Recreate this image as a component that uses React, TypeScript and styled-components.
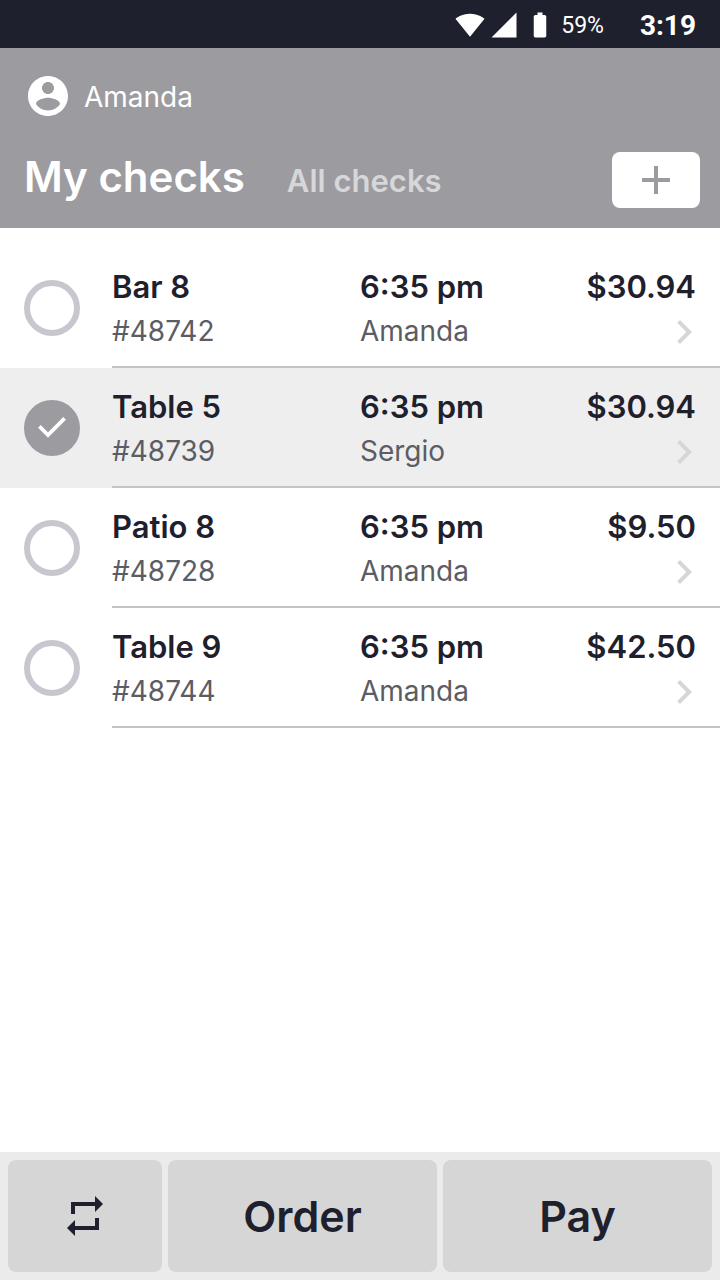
import React, { useState } from "react";
import styled, { createGlobalStyle } from "styled-components";

const ink = "#1f202d";
const grey = "#9b9ba0";

const GlobalStyle = createGlobalStyle`
  *, *::before, *::after { box-sizing: border-box; }
  body { margin: 0; background: #fff; }
  button { border: 0; padding: 0; background: none; color: inherit; font: inherit; cursor: pointer; }
`;

const Screen = styled.div`
  min-height: 100vh;
  display: flex;
  flex-direction: column;
  background: #fff;
  color: ${ink};
  font-family: Inter, "Liberation Sans", sans-serif;
`;

const StatusBar = styled.div`
  height: 48px;
  padding: 2px 24px 0 0;
  display: flex;
  align-items: center;
  justify-content: flex-end;
  gap: 6px;
  background: ${ink};
  color: #fff;
  font-family: Roboto, sans-serif;
  line-height: 32px;
`;

const Signals = styled.div`
  display: flex;
  gap: 4px;
`;

const BatteryLevel = styled.span`
  padding-top: 2px;
  font-size: 23px;
`;

const Clock = styled.time`
  margin-left: 30px;
  padding-top: 2px;
  font-size: 28px;
  font-weight: 700;
`;

const Header = styled.header`
  padding: 24px 20px 20px 24px;
  display: flex;
  flex-direction: column;
  gap: 32px;
  background: ${grey};
  color: #fff;
`;

const User = styled.div`
  display: flex;
  align-items: center;
  gap: 12px;
  font-size: 28px;
  line-height: 38px;
`;

const UserName = styled.span`
  padding-top: 2px;
`;

const HeaderRow = styled.div`
  height: 56px;
  display: flex;
  align-items: center;
  justify-content: space-between;
`;

const Tabs = styled.nav`
  padding-bottom: 2px;
  display: flex;
  align-items: baseline;
  gap: 42px;
`;

const Tab = styled.button<{ $active: boolean }>`
  font-size: ${(p) => (p.$active ? 42 : 31)}px;
  font-weight: 600;
  line-height: 52px;
  color: ${(p) => (p.$active ? "#fff" : "#d7d7d9")};
`;

const AddButton = styled.button`
  width: 88px;
  height: 56px;
  display: flex;
  align-items: center;
  justify-content: center;
  border-radius: 8px;
  background: #fff;
  color: ${grey};
`;

const CheckList = styled.ul`
  flex: 1;
  margin: 0;
  padding: 20px 0;
  list-style: none;
`;

const CheckRow = styled.li<{ $selected: boolean }>`
  height: 120px;
  display: flex;
  background: ${(p) => (p.$selected ? "#eeeeee" : "#fff")};
`;

const Selector = styled.label`
  width: 112px;
  padding-left: 24px;
  display: grid;
  grid-template-columns: 56px;
  align-content: center;
  cursor: pointer;

  > * { grid-area: 1 / 1; }
  > svg { place-self: center; pointer-events: none; }
`;

const SelectBox = styled.input`
  appearance: none;
  width: 56px;
  height: 56px;
  margin: 0;
  border: 6px solid #c7c7cf;
  border-radius: 50%;
  background: #fff;
  cursor: pointer;

  &:checked { border-color: ${grey}; background: ${grey}; }
`;

const CheckLink = styled.a`
  flex: 1;
  padding: 20px 24px 0 0;
  display: grid;
  grid-template-columns: 248px 1fr auto;
  border-bottom: 2px solid #c4c4c8;
  color: inherit;
  text-decoration: none;
`;

const Column = styled.div<{ $end?: boolean }>`
  display: flex;
  flex-direction: column;
  align-items: ${(p) => (p.$end ? "flex-end" : "flex-start")};
  gap: 6px;
`;

const Primary = styled.span`
  font-size: 31px;
  font-weight: 600;
  line-height: 38px;
`;

const Secondary = styled.span`
  font-size: 28px;
  line-height: 38px;
  color: #5c5c64;
`;

const ChevronSlot = styled.span`
  height: 40px;
  padding-right: 4px;
  display: flex;
  align-items: center;
  color: #d6d6d6;
`;

const ActionBar = styled.footer`
  position: sticky;
  bottom: 0;
  padding: 8px;
  display: grid;
  grid-template-columns: 154px 1fr 1fr;
  gap: 6px;
  background: #ebebeb;
`;

const Action = styled.button`
  height: 112px;
  display: flex;
  align-items: center;
  justify-content: center;
  border-radius: 8px;
  background: #d6d6d6;
  color: ${ink};
  font-size: 43px;
  font-weight: 600;
  line-height: 52px;
`;

const Icon = ({ d, size }: { d: string; size: number }) => (
  <svg width={size} height={size} viewBox="0 0 24 24" fill="currentColor" aria-hidden="true">
    <path d={d} />
  </svg>
);

const icons = {
  wifi: "M12.01 21.49L23.64 7c-.45-.34-4.93-4-11.64-4C5.28 3 .81 6.66.36 7l11.63 14.49.01.01.01-.01z",
  cell: "M2 22h20V2z",
  battery:
    "M15.67 4H14V2h-4v2H8.33C7.6 4 7 4.6 7 5.33v15.33C7 21.4 7.6 22 8.33 22h7.33c.74 0 1.34-.6 1.34-1.33V5.33C17 4.6 16.4 4 15.67 4z",
  account:
    "M12 2C6.48 2 2 6.48 2 12s4.48 10 10 10 10-4.48 10-10S17.52 2 12 2zm0 3c1.66 0 3 1.34 3 3s-1.34 3-3 3-3-1.34-3-3 1.34-3 3-3zm0 14.2c-2.5 0-4.71-1.28-6-3.22.03-1.99 4-3.08 6-3.08 1.99 0 5.97 1.09 6 3.08-1.29 1.94-3.5 3.22-6 3.22z",
  add: "M19 13h-6v6h-2v-6H5v-2h6V5h2v6h6v2z",
  repeat: "M7 7h10v3l4-4-4-4v3H5v6h2V7zm10 10H7v-3l-4 4 4 4v-3h12v-6h-2v4z",
};

const Tick = () => (
  <svg width="38" height="38" viewBox="0 0 38 38" fill="none" aria-hidden="true">
    <path d="M6.4 17.4L15 26L31.6 9.4" stroke="#fff" strokeWidth="3.8" />
  </svg>
);

const Chevron = () => (
  <svg width="16" height="24" viewBox="8 6 8 12" fill="currentColor" aria-hidden="true">
    <path d="M10 6L8.59 7.41 13.17 12l-4.58 4.59L10 18l6-6z" />
  </svg>
);

const checks = [
  { id: "48742", place: "Bar 8", time: "6:35 pm", server: "Amanda", total: "$30.94" },
  { id: "48739", place: "Table 5", time: "6:35 pm", server: "Sergio", total: "$30.94" },
  { id: "48728", place: "Patio 8", time: "6:35 pm", server: "Amanda", total: "$9.50" },
  { id: "48744", place: "Table 9", time: "6:35 pm", server: "Amanda", total: "$42.50" },
];

export default function App() {
  const [selected, setSelected] = useState<string[]>(["48739"]);
  const [tab, setTab] = useState("My checks");

  const toggle = (id: string) =>
    setSelected((s) => (s.includes(id) ? s.filter((x) => x !== id) : [...s, id]));

  return (
    <Screen>
      <GlobalStyle />
      <StatusBar>
        <Signals>
          <Icon d={icons.wifi} size={30} />
          <Icon d={icons.cell} size={30} />
        </Signals>
        <Icon d={icons.battery} size={30} />
        <BatteryLevel>59%</BatteryLevel>
        <Clock>3:19</Clock>
      </StatusBar>

      <Header>
        <User>
          <Icon d={icons.account} size={48} />
          <UserName>Amanda</UserName>
        </User>
        <HeaderRow>
          <Tabs>
            {["My checks", "All checks"].map((name) => (
              <Tab key={name} type="button" $active={tab === name} onClick={() => setTab(name)}>
                {name}
              </Tab>
            ))}
          </Tabs>
          <AddButton type="button" aria-label="New check">
            <Icon d={icons.add} size={48} />
          </AddButton>
        </HeaderRow>
      </Header>

      <CheckList>
        {checks.map((c) => {
          const on = selected.includes(c.id);
          return (
            <CheckRow key={c.id} $selected={on}>
              <Selector>
                <SelectBox
                  type="checkbox"
                  aria-label={`Select ${c.place}`}
                  checked={on}
                  onChange={() => toggle(c.id)}
                />
                {on && <Tick />}
              </Selector>
              <CheckLink href={`#${c.id}`}>
                <Column>
                  <Primary>{c.place}</Primary>
                  <Secondary>#{c.id}</Secondary>
                </Column>
                <Column>
                  <Primary>{c.time}</Primary>
                  <Secondary>{c.server}</Secondary>
                </Column>
                <Column $end>
                  <Primary>{c.total}</Primary>
                  <ChevronSlot>
                    <Chevron />
                  </ChevronSlot>
                </Column>
              </CheckLink>
            </CheckRow>
          );
        })}
      </CheckList>

      <ActionBar>
        <Action type="button" aria-label="Transfer">
          <Icon d={icons.repeat} size={48} />
        </Action>
        <Action type="button">Order</Action>
        <Action type="button">Pay</Action>
      </ActionBar>
    </Screen>
  );
}
